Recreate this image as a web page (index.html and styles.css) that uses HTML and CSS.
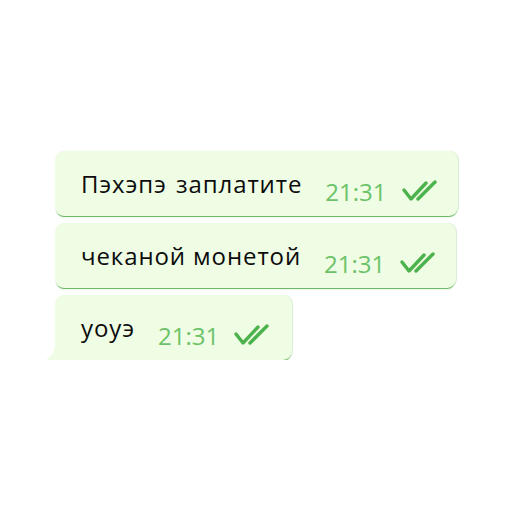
FILE: index.html
```html
<!DOCTYPE html>
<html lang="ru">
<head>
    <meta charset="UTF-8">
    <title>Чат</title>
    <link rel="stylesheet" href="styles.css">
</head>
<body>
    <div class="chat">
        <div class="bubble">
            <span class="text wide">Пэхэпэ заплатите</span>
            <span class="time">21:31</span>
            <svg class="check" viewBox="0 0 38 22" width="38" height="22">
                <path d="M2 10 L9 19 L24 3" />
                <path d="M16 19 L33 2" />
            </svg>
        </div>
        <div class="bubble">
            <span class="text">чеканой монетой</span>
            <span class="time">21:31</span>
            <svg class="check" viewBox="0 0 38 22" width="38" height="22">
                <path d="M2 10 L9 19 L24 3" />
                <path d="M16 19 L33 2" />
            </svg>
        </div>
        <div class="bubble last">
            <span class="text">уоуэ</span>
            <span class="time">21:31</span>
            <svg class="check" viewBox="0 0 38 22" width="38" height="22">
                <path d="M2 10 L9 19 L24 3" />
                <path d="M16 19 L33 2" />
            </svg>
            <!-- хвостик у последнего сообщения -->
            <svg class="tail" viewBox="0 0 10 22" width="10" height="22">
                <path d="M10 0 C10 12 6 18 0 22 L10 22 Z" />
            </svg>
        </div>
    </div>
</body>
</html>
```

FILE: styles.css
```css
body {
    margin: 0;
    background: #ffffff;
    font-family: 'Open Sans', sans-serif;
}
.chat {
    display: flex;
    flex-direction: column;
    align-items: flex-start;
    gap: 7px;
    padding: 151px 0 0 55px;
}
.bubble {
    position: relative;
    display: flex;
    align-items: flex-start;
    height: 65px;
    box-sizing: border-box;
    padding: 19px 18px 0 26px;
    background-color: #effde4;
    border-radius: 9px;
    box-shadow: 0 2px 1px -1px #5fb35a, 1px 0 1px rgba(95, 179, 90, 0.25);
}
.bubble.last {
    border-bottom-left-radius: 0;
    padding-right: 20px;
}
.text {
    font-size: 24px;
    line-height: 28px;
    letter-spacing: 0.9px;
    color: #0c0c0c;
    white-space: nowrap;
}
.text.wide {
    word-spacing: 2px; /* чуть шире пробел, как в оригинале */
}
.time {
    font-size: 24px;
    line-height: 28px;
    margin: 8px 0 0 23px;
    color: #6cc269;
}
.check {
    margin: 10px 0 0 15px;
    fill: none;
    stroke: #4cb34c;
    stroke-width: 3.4;
    stroke-linecap: round;
    stroke-linejoin: round;
}
.tail {
    position: absolute;
    left: -9px;
    bottom: 0;
    fill: #effde4;
}
```
